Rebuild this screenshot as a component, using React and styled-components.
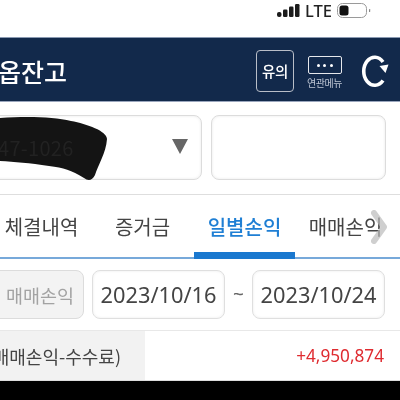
import React from "react";
import styled, { createGlobalStyle } from "styled-components";

const Global = createGlobalStyle`
  html, body { margin: 0; padding: 0; background: #fff; }
  body { font-family: "Noto Sans CJK KR", "Noto Sans", sans-serif; }
`;
const Page = styled.div`
  width: 400px; height: 400px; overflow: hidden; display: flex; flex-direction: column;
  background: #fff; filter: blur(0.45px);
`;
const StatusBar = styled.div`
  height: 37px; display: flex; align-items: flex-start; justify-content: flex-end;
  padding: 1px 32px 0 0; gap: 4px; box-sizing: border-box; flex: none;
`;
const Lte = styled.span`
  font: 500 16.5px/20px "Noto Sans", sans-serif; color: #222; letter-spacing: 0;
`;
const Header = styled.header`
  height: 65px; flex: none; background: #12294b; display: flex; align-items: center;
  border-top: 1px solid #8a9ab2; box-sizing: border-box; border-bottom: 1px solid #9aa6bd;
`;
const Title = styled.h1`
  margin: 0 0 0 -2px; font-size: 25px; font-weight: 500; color: #fff; line-height: 1; flex: 1;
  white-space: nowrap; position: relative; top: 2px;
`;
const NoticeButton = styled.div`
  width: 38px; height: 42px; border: 1.5px solid #b9bec8; border-radius: 4px; box-sizing: border-box;
  display: flex; align-items: center; justify-content: center; color: #fff; font-size: 14.5px; font-weight: 500;
  margin-right: 12px; margin-top: 2px; letter-spacing: -0.3px;
`;
const MenuButton = styled.div`
  display: flex; flex-direction: column; align-items: center; width: 37px; margin-right: 17px; margin-top: 6px;
`;
const MenuBox = styled.div`
  width: 34px; height: 18px; border: 1.5px solid #e6e8ec; border-radius: 2px; box-sizing: border-box;
  display: flex; align-items: center; justify-content: center; gap: 3.5px;
`;
const Dot = styled.i`
  width: 3px; height: 3px; background: #fff; border-radius: 50%; display: block;
`;
const MenuLabel = styled.span`
  font-size: 10px; color: #bcc4d2; line-height: 13px; margin-top: 2px; white-space: nowrap; letter-spacing: -0.4px;
`;
const Refresh = styled.svg`
  width: 30px; height: 38px; margin-right: 10px; margin-top: 3px; flex: none;
`;
const SelectRow = styled.div`
  height: 93px; flex: none; box-sizing: border-box; display: flex; gap: 9px; padding-top: 13px;
  border-bottom: 1px solid #dedede; margin-left: -30px; padding-right: 14px;
`;
const Field = styled.div`
  height: 65px; box-sizing: border-box; border: 1.5px solid #dcdcdc; border-radius: 8px; background: #fff;
  box-shadow: inset 0 0 3px #e8e8e8; display: flex; align-items: center; position: relative;
  width: ${p => p.$w}px; flex: none;
`;
const Account = styled.span`
  font-size: 20px; color: #222; position: relative; z-index: 1; margin-left: 27px; white-space: nowrap; letter-spacing: 0.3px;
`;
const Arrow = styled.i`
  position: absolute; right: 13px; top: 23px; width: 0; height: 0;
  border-left: 8.5px solid transparent; border-right: 8.5px solid transparent; border-top: 15px solid #666;
`;
const Scribble = styled.svg`
  position: absolute; left: 28px; top: -3px; width: 112px; height: 70px;
`;
const Tabs = styled.nav`
  height: 64px; flex: none; box-sizing: border-box; border-bottom: 2px solid #77a9da; display: flex;
  position: relative; margin-left: -8px;
`;
const Tab = styled.div`
  width: ${p => p.$w}px; flex: none; box-sizing: border-box; height: 64px; display: flex; align-items: center; justify-content: center;
  font-size: 20px; line-height: 1; white-space: nowrap;
  color: ${p => (p.$active ? "#1f7fd4" : "#444")}; font-weight: ${p => (p.$active ? 500 : 400)};
  ${p => (p.$active ? "border-bottom: 7px solid #1a78cf; padding-top: 7px;" : "")}
`;
const Chevron = styled.svg`
  position: absolute; left: 379px; top: 15px; width: 16px; height: 34px;
`;
const DateRow = styled.div`
  height: 72px; flex: none; box-sizing: border-box; display: flex; align-items: flex-start; padding-top: 11px;
  margin-left: -30px; border-bottom: 1px solid #e8e8e8;
`;
const KindButton = styled.div`
  width: 114px; height: 49px; box-sizing: border-box; border: 1.5px solid #dcdcdc; border-radius: 8px; background: #f3f3f3;
  color: #a3a3a3; font-size: 18.5px; display: flex; align-items: center; justify-content: flex-end; padding-right: 9px;
  margin-right: 8px; flex: none; white-space: nowrap;
`;
const DateBox = styled.div`
  width: 133px; height: 49px; box-sizing: border-box; border: 1.5px solid #dfdfdf; border-radius: 8px;
  box-shadow: inset 0 0 3px #ececec; color: #444; font: 400 21.8px/1 "Noto Sans", sans-serif; display: flex; align-items: center;
  justify-content: center; flex: none; white-space: nowrap;
`;
const Tilde = styled.span`
  width: 27px; text-align: center; flex: none; font: 400 19px/49px "Noto Sans", sans-serif; color: #666;
`;
const ResultRow = styled.div`
  height: 50px; flex: none; display: flex; align-items: center; border-bottom: 1px solid #ddd; box-sizing: border-box;
`;
const ResultLabel = styled.div`
  width: 145px; height: 100%; flex: none; background: #f2f2f2; color: #444; font-size: 18px; display: flex; align-items: center;
  justify-content: flex-end; padding-right: 24px; box-sizing: border-box; white-space: nowrap; overflow: hidden;
`;
const ResultValue = styled.div`
  flex: 1; text-align: right; padding-right: 16px; color: #df2b30; font: 400 17.2px/1 "Noto Sans", sans-serif;
`;
const BlackBar = styled.div`
  flex: 1; background: #000;
`;

export default function App() {
  return (
    <>
      <Global />
      <Page>
        <StatusBar>
          <svg width="25" height="16" viewBox="0 0 25 16" style={{ marginTop: 2 }}>
            <rect x="1" y="9" width="4.5" height="5" rx="2" fill="#1c1c1c" />
            <rect x="7" y="6.5" width="4.5" height="7.5" rx="1.2" fill="#1c1c1c" />
            <rect x="13" y="3.5" width="4.5" height="10.5" rx="1.2" fill="#1c1c1c" />
            <rect x="19" y="1" width="4.5" height="13" rx="1.2" fill="#1c1c1c" />
          </svg>
          <Lte>LTE</Lte>
          <svg width="36" height="18" viewBox="0 0 36 18" style={{ marginTop: 1, marginRight: -4 }}>
            <rect x="1.5" y="1.5" width="29" height="14" rx="5" fill="#fff" stroke="#9a9a9a" />
            <rect x="3.5" y="3.5" width="9" height="10" rx="2.5" fill="#111" />
            <rect x="33" y="7" width="1.2" height="3" rx="0.6" fill="#888" />
          </svg>
        </StatusBar>
        <Header>
          <Title>옵잔고</Title>
          <NoticeButton>유의</NoticeButton>
          <MenuButton>
            <MenuBox><Dot /><Dot /><Dot /></MenuBox>
            <MenuLabel>연관메뉴</MenuLabel>
          </MenuButton>
          <Refresh viewBox="0 0 30 38">
            <path d="M23 28.5 A11 14 0 1 1 23 10" fill="none" stroke="#fff" strokeWidth="3.6" />
            <path d="M19.5 14 L28.5 12.5 L25.5 21 Z" fill="#fff" />
          </Refresh>
        </Header>
        <SelectRow>
          <Field $w={232}>
            <Account>47-1026</Account>
            <Arrow />
            <Scribble viewBox="0 0 112 70">
              <path d="M0 5 C30 3 55 4 72 8 C88 11 108 18 108 26 C107 40 99 52 96 62 C93 68 89 68 85 65 C72 57 65 55 50 53 C30 50 15 49 0 48 Z" fill="#0a0a0a" opacity="0.96" />
            </Scribble>
          </Field>
          <Field $w={175} />
        </SelectRow>
        <Tabs>
          <Tab $w={99}>체결내역</Tab>
          <Tab $w={103}>증거금</Tab>
          <Tab $w={101} $active>일별손익</Tab>
          <Tab $w={101}>매매손익</Tab>
          <Chevron viewBox="0 0 16 34">
            <path d="M3 3 L13 17 L3 31" fill="none" stroke="#bbb" strokeWidth="6" strokeLinecap="round" strokeLinejoin="round" opacity="0.7" />
          </Chevron>
        </Tabs>
        <DateRow>
          <KindButton>매매손익</KindButton>
          <DateBox>2023/10/16</DateBox>
          <Tilde>~</Tilde>
          <DateBox>2023/10/24</DateBox>
        </DateRow>
        <ResultRow>
          <ResultLabel>(매매손익-수수료)</ResultLabel>
          <ResultValue>+4,950,874</ResultValue>
        </ResultRow>
        <BlackBar />
      </Page>
    </>
  );
}
